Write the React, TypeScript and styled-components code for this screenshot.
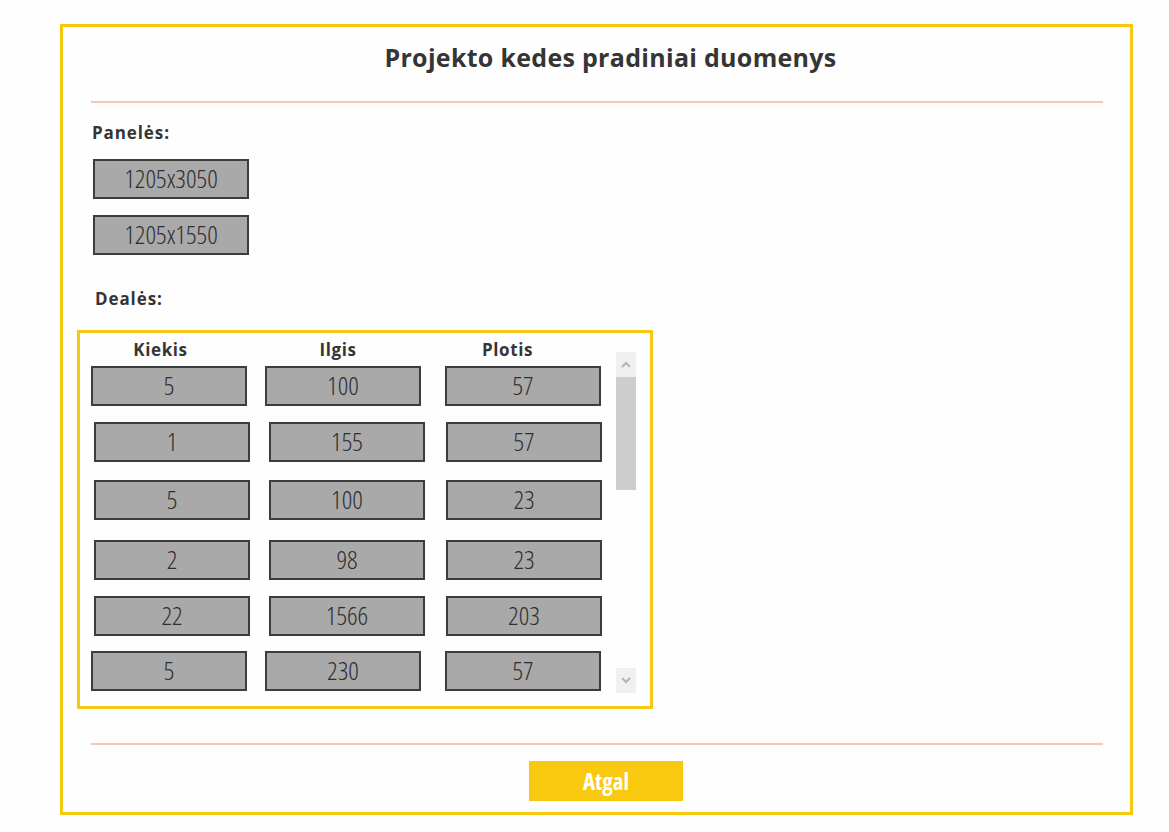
import React from "react";
import styled, { createGlobalStyle } from "styled-components";

const Global = createGlobalStyle`
  html, body { margin: 0; padding: 0; background: #fefefe; }
  body { font-family: "Open Sans", sans-serif; color: #333; }
  * { box-sizing: border-box; }
`;

const Frame = styled.div`
  margin: 24px 0 0 60px;
  width: 1073px;
  height: 791px;
  border: 3px solid #f8c80f;
  padding: 15px 27px 0 28px;
  display: flex;
  flex-direction: column;
  & > * { flex-shrink: 0; }
`;

const Title = styled.h1`
  margin: 0;
  padding-left: 27px;
  font-family: "Open Sans", sans-serif;
  font-weight: 700;
  font-size: 25px;
  letter-spacing: 0.3px;
  line-height: 30px;
  text-align: center;
  color: #353535;
`;

const Rule = styled.hr<{ $top: number }>`
  height: 0;
  border: none;
  border-top: 2px solid #f7c9a8;
  margin: ${(p) => p.$top}px 0 0;
`;

const Label = styled.div<{ $top: number; $indent: number }>`
  margin-top: ${(p) => p.$top}px;
  margin-left: ${(p) => p.$indent}px;
  font-family: "Open Sans", sans-serif;
  font-weight: 700;
  font-size: 17px;
  letter-spacing: 0.9px;
  line-height: 20px;
  color: #353535;
`;

const PanelList = styled.div`
  display: flex;
  flex-direction: column;
  gap: 16px;
  margin: 16px 0 0 2px;
`;

const ValueBox = styled.div`
  width: 156px;
  height: 40px;
  border: 2px solid #3d3d3d;
  background: #a9a9a9;
  display: flex;
  align-items: center;
  justify-content: center;
  padding-bottom: 2px;
  font-family: "Open Sans", sans-serif;
  font-stretch: 75%;
  font-weight: 300;
  font-size: 26px;
  color: #2f2f2f;
  line-height: 1;
`;

const TableBox = styled.div`
  margin: 21px 0 0 -14px;
  width: 576px;
  height: 379px;
  border: 3px solid #f8c80f;
  display: flex;
`;

const TableBody = styled.div`
  width: 536px;
  padding-top: 7px;
`;

const HeaderRow = styled.div`
  display: grid;
  grid-template-columns: 161px 194px 145px;
  font-family: "Open Sans", sans-serif;
  font-weight: 700;
  font-size: 17px;
  letter-spacing: 0.6px;
  line-height: 20px;
  text-align: center;
  color: #353535;
`;

const DataRow = styled.div<{ $gap: number; $shifted: boolean }>`
  display: grid;
  grid-template-columns: ${(p) => (p.$shifted ? "175px 177px 156px" : "174px 180px 156px")};
  padding-left: ${(p) => (p.$shifted ? 14 : 11)}px;
  margin-top: ${(p) => p.$gap}px;
`;

const Scrollbar = styled.div`
  margin-top: 19px;
  width: 20px;
  height: 341px;
  display: flex;
  flex-direction: column;
  background: #fdfdfd;
`;

const ScrollArrow = styled.div`
  height: 25px;
  background: #f0f0f0;
  display: flex;
  align-items: center;
  justify-content: center;
`;

const ScrollThumb = styled.div`
  height: 113px;
  background: #cdcdcd;
`;

const ScrollTrack = styled.div`
  flex: 1;
`;

const Footer = styled.div`
  display: flex;
  justify-content: center;
  padding-left: 18px;
  margin-top: 16px;
`;

const BackButton = styled.button`
  width: 154px;
  height: 40px;
  border: none;
  background: #f8c90f;
  color: #fff;
  font-family: "Open Sans", sans-serif;
  font-stretch: 75%;
  font-weight: 700;
  font-size: 23px;
  padding: 0;
  cursor: pointer;
`;

const Chevron = ({ up }: { up: boolean }) => (
  <svg width="10" height="7" viewBox="0 0 10 7">
    <path
      d={up ? "M1 6 L5 2 L9 6" : "M1 1 L5 5 L9 1"}
      fill="none"
      stroke="#b4b4b4"
      strokeWidth="2"
    />
  </svg>
);

const rows = [
  { v: ["5", "100", "57"], gap: 6, shifted: false },
  { v: ["1", "155", "57"], gap: 16, shifted: true },
  { v: ["5", "100", "23"], gap: 18, shifted: true },
  { v: ["2", "98", "23"], gap: 20, shifted: true },
  { v: ["22", "1566", "203"], gap: 16, shifted: true },
  { v: ["5", "230", "57"], gap: 15, shifted: false },
];

export default function App() {
  return (
    <>
      <Global />
      <Frame>
        <Title>Projekto kedes pradiniai duomenys</Title>
        <Rule $top={29} />
        <Label $top={20} $indent={1}>Panelės:</Label>
        <PanelList>
          <ValueBox>1205x3050</ValueBox>
          <ValueBox>1205x1550</ValueBox>
        </PanelList>
        <Label $top={34} $indent={4}>Dealės:</Label>
        <TableBox>
          <TableBody>
            <HeaderRow>
              <div>Kiekis</div>
              <div>Ilgis</div>
              <div>Plotis</div>
            </HeaderRow>
            {rows.map((r, i) => (
              <DataRow key={i} $gap={r.gap} $shifted={r.shifted}>
                {r.v.map((x, j) => (
                  <ValueBox key={j}>{x}</ValueBox>
                ))}
              </DataRow>
            ))}
          </TableBody>
          <Scrollbar>
            <ScrollArrow>
              <Chevron up />
            </ScrollArrow>
            <ScrollThumb />
            <ScrollTrack />
            <ScrollArrow>
              <Chevron up={false} />
            </ScrollArrow>
          </Scrollbar>
        </TableBox>
        <Rule $top={34} />
        <Footer>
          <BackButton>Atgal</BackButton>
        </Footer>
      </Frame>
    </>
  );
}
